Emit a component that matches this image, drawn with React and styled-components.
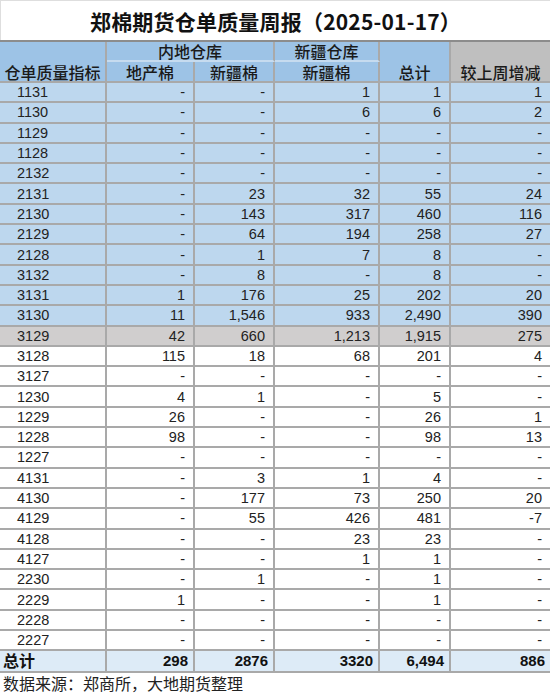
import styled, { createGlobalStyle } from 'styled-components';

const rows = [
  ['1131', '-', '-', '1', '1', '1'],
  ['1130', '-', '-', '6', '6', '2'],
  ['1129', '-', '-', '-', '-', '-'],
  ['1128', '-', '-', '-', '-', '-'],
  ['2132', '-', '-', '-', '-', '-'],
  ['2131', '-', '23', '32', '55', '24'],
  ['2130', '-', '143', '317', '460', '116'],
  ['2129', '-', '64', '194', '258', '27'],
  ['2128', '-', '1', '7', '8', '-'],
  ['3132', '-', '8', '-', '8', '-'],
  ['3131', '1', '176', '25', '202', '20'],
  ['3130', '11', '1,546', '933', '2,490', '390'],
  ['3129', '42', '660', '1,213', '1,915', '275'],
  ['3128', '115', '18', '68', '201', '4'],
  ['3127', '-', '-', '-', '-', '-'],
  ['1230', '4', '1', '-', '5', '-'],
  ['1229', '26', '-', '-', '26', '1'],
  ['1228', '98', '-', '-', '98', '13'],
  ['1227', '-', '-', '-', '-', '-'],
  ['4131', '-', '3', '1', '4', '-'],
  ['4130', '-', '177', '73', '250', '20'],
  ['4129', '-', '55', '426', '481', '-7'],
  ['4128', '-', '-', '23', '23', '-'],
  ['4127', '-', '-', '1', '1', '-'],
  ['2230', '-', '1', '-', '1', '-'],
  ['2229', '1', '-', '-', '1', '-'],
  ['2228', '-', '-', '-', '-', '-'],
  ['2227', '-', '-', '-', '-', '-'],
];

const totals = ['298', '2876', '3320', '6,494', '886'];

const rowColor = (i) => {
  if (i < 12) return '#bdd7ee';
  if (i === 12) return '#d0cece';
  return '#ffffff';
};

export default function App() {
  return (
    <Page>
      <GlobalStyle />
      <Title>郑棉期货仓单质量周报（2025-01-17）</Title>
      <Sheet>
        <HeadCell $bg="#9dc3e6" $row={2} $valign="flex-end">
          仓单质量指标
        </HeadCell>
        <HeadCell $bg="#9dc3e6" $col={2} $soft>
          内地仓库
        </HeadCell>
        <HeadCell $bg="#9dc3e6" $soft>
          新疆仓库
        </HeadCell>
        <HeadCell $bg="#9dc3e6" $row={2} $valign="flex-end">
          总计
        </HeadCell>
        <HeadCell $bg="#bfbfbf" $row={2} $valign="flex-end" $last>
          较上周增减
        </HeadCell>
        <HeadCell $bg="#9dc3e6">地产棉</HeadCell>
        <HeadCell $bg="#9dc3e6">新疆棉</HeadCell>
        <HeadCell $bg="#9dc3e6">新疆棉</HeadCell>

        {rows.map((row, i) =>
          row.map((val, j) =>
            j === 0 ? (
              <CodeCell key={i + '-' + j} $bg={rowColor(i)}>
                {val}
              </CodeCell>
            ) : (
              <NumCell key={i + '-' + j} $bg={rowColor(i)} $last={j === 5}>
                {val}
              </NumCell>
            )
          )
        )}

        <TotalLabel>总计</TotalLabel>
        {totals.map((val, j) => (
          <TotalCell key={j} $last={j === 4}>
            {val}
          </TotalCell>
        ))}
      </Sheet>
      <Source>数据来源：郑商所，大地期货整理</Source>
    </Page>
  );
}

const GlobalStyle = createGlobalStyle`
  html, body {
    margin: 0;
    padding: 0;
    background: #fff;
  }
  body {
    font-family: "Liberation Sans", "Noto Sans CJK SC", sans-serif;
  }
`;

const Page = styled.div`
  width: 550px;
  height: 694px;
  overflow: hidden;
  background: #fff;
  border-top: 1px solid #dedede;
  box-sizing: border-box;
`;

const Title = styled.h1`
  margin: 0;
  height: 39px;
  display: flex;
  align-items: center;
  justify-content: center;
  border-left: 1px solid #dedede;
  font-family: "Noto Sans CJK SC", sans-serif;
  font-size: 21px;
  font-weight: 700;
  color: #111;
  letter-spacing: 0.2px;
`;

const Sheet = styled.div`
  display: grid;
  grid-template-columns: 107px 88px 80px 105px 71px 99px;
  grid-template-rows: 20px 21px repeat(28, 20.3px) 21.3px;
  border-top: 2px solid #8c8c8c;
`;

const Cell = styled.div`
  box-sizing: border-box;
  display: flex;
  align-items: center;
  overflow: hidden;
  white-space: nowrap;
  background: ${(p) => p.$bg || '#fff'};
  border-right: ${(p) => (p.$last ? 'none' : '2px solid #a9a9a9')};
  border-bottom: 2px solid #a9a9a9;
  color: #222;
`;

const HeadCell = styled(Cell)`
  grid-column: span ${(p) => p.$col || 1};
  grid-row: span ${(p) => p.$row || 1};
  justify-content: center;
  align-items: ${(p) => p.$valign || 'center'};
  padding-bottom: ${(p) => (p.$valign ? '1px' : '0')};
  border-bottom-color: ${(p) => (p.$soft ? '#c6dbef' : '#a9a9a9')};
  font-family: "Noto Sans CJK SC", sans-serif;
  font-size: 16px;
  font-weight: 500;
  color: #1a1a1a;
  line-height: 16px;
`;

const CodeCell = styled(Cell)`
  padding-left: 17px;
  font-size: 14.5px;
`;

const NumCell = styled(Cell)`
  justify-content: flex-end;
  padding-right: 8px;
  font-size: 14.5px;
`;

const TotalLabel = styled(Cell)`
  background: #ddebf7;
  padding-left: 3px;
  font-family: "Noto Sans CJK SC", sans-serif;
  font-size: 16px;
  font-weight: 700;
  line-height: 17px;
  color: #111;
`;

const TotalCell = styled(Cell)`
  background: #ddebf7;
  justify-content: flex-end;
  padding-right: 5px;
  font-size: 15px;
  font-weight: 700;
  color: #111;
`;

const Source = styled.div`
  height: 21px;
  padding-left: 3px;
  font-family: "Noto Sans CJK SC", sans-serif;
  font-size: 16px;
  line-height: 21px;
  color: #222;
`;
